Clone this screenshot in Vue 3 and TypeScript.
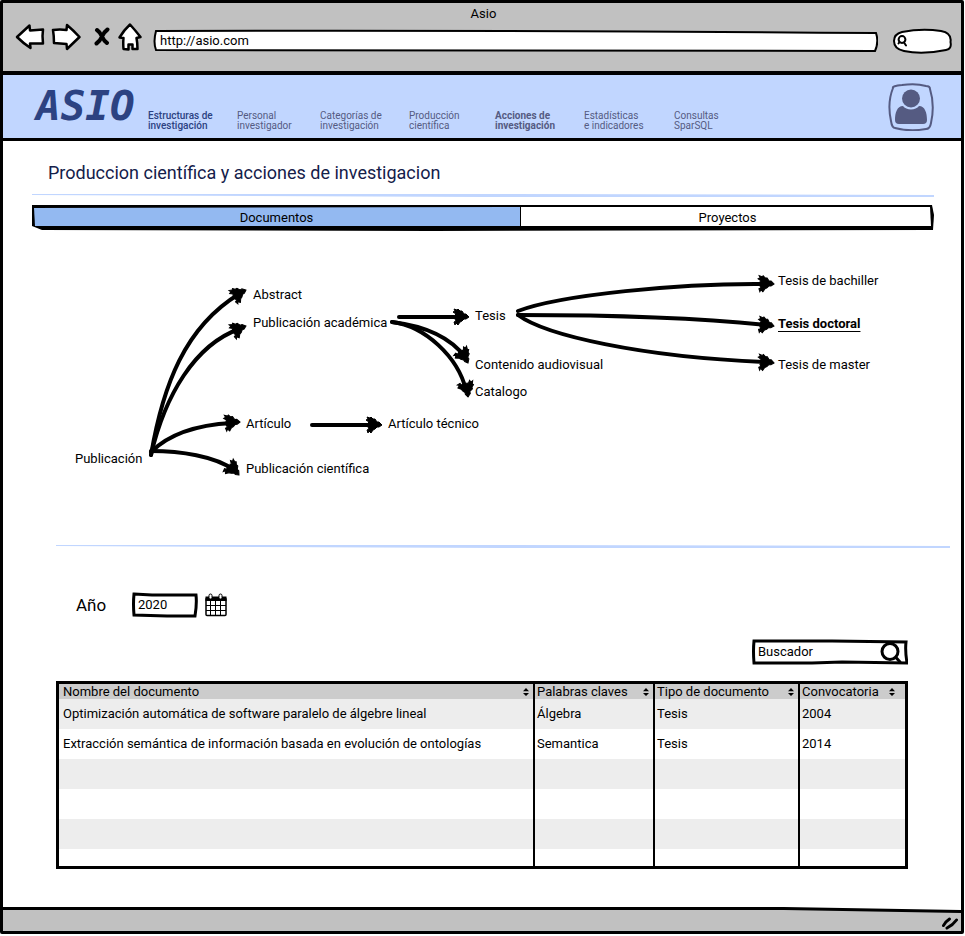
<script setup lang="ts">
import { ref, computed } from 'vue'

interface NavItem { top: string; bottom: string; width: number; tone?: string }
interface GraphNode { label: string; x: number; y: number; selected?: boolean }
interface Arrow { path: string; tip: [number, number]; angle: number }
interface Doc { name: string; keywords: string; kind: string; year: string }

const nav: NavItem[] = [
  { top: 'Estructuras de', bottom: 'investigación', width: 89, tone: 'strong' },
  { top: 'Personal', bottom: 'investigador', width: 83 },
  { top: 'Categorías de', bottom: 'investigación', width: 89 },
  { top: 'Producción', bottom: 'científica', width: 86 },
  { top: 'Acciones de', bottom: 'investigación', width: 89, tone: 'current' },
  { top: 'Estadísticas', bottom: 'e indicadores', width: 90 },
  { top: 'Consultas', bottom: 'SparSQL', width: 60 },
]

const nodes: GraphNode[] = [
  { label: 'Publicación', x: 43, y: 220 },
  { label: 'Abstract', x: 221, y: 56 },
  { label: 'Publicación académica', x: 221, y: 84 },
  { label: 'Artículo', x: 214, y: 185 },
  { label: 'Publicación científica', x: 214, y: 230 },
  { label: 'Artículo técnico', x: 356, y: 185 },
  { label: 'Tesis', x: 443, y: 77 },
  { label: 'Contenido audiovisual', x: 443, y: 126 },
  { label: 'Catalogo', x: 443, y: 153 },
  { label: 'Tesis de bachiller', x: 746, y: 42 },
  { label: 'Tesis doctoral', x: 746, y: 85, selected: true },
  { label: 'Tesis de master', x: 746, y: 126 },
]

const arrows: Arrow[] = [
  { path: 'M151 455C163 385 185 327 239 294', tip: [246, 290], angle: -30 },
  { path: 'M151 455C165 395 195 345 239 329', tip: [246, 326], angle: -24 },
  { path: 'M151 452C168 435 195 425 232 423', tip: [240, 422], angle: -5 },
  { path: 'M151 451C180 451 215 456 234 470', tip: [239, 475], angle: 42 },
  { path: 'M312 425H375', tip: [382, 425], angle: 0 },
  { path: 'M399 317H462', tip: [469, 317], angle: 0 },
  { path: 'M392 322C425 326 450 337 465 357', tip: [468, 363], angle: 57 },
  { path: 'M392 322C425 326 458 357 466 390', tip: [468, 397], angle: 78 },
  { path: 'M518 311C560 295 680 283 766 284', tip: [774, 284], angle: 1 },
  { path: 'M518 315C600 315 690 317 766 325', tip: [774, 326], angle: 6 },
  { path: 'M518 315C545 335 640 357 766 362', tip: [774, 363], angle: 3 },
]

const columns = ['Nombre del documento', 'Palabras claves', 'Tipo de documento', 'Convocatoria']
const keys: (keyof Doc)[] = ['name', 'keywords', 'kind', 'year']
const docs = ref<Doc[]>([
  { name: 'Optimización automática de software paralelo de álgebre lineal', keywords: 'Álgebra', kind: 'Tesis', year: '2004' },
  { name: 'Extracción semántica de información basada en evolución de ontologías', keywords: 'Semantica', kind: 'Tesis', year: '2014' },
])
const blankRows = computed(() => Math.max(0, 6 - docs.value.length))

const url = ref('http://asio.com')
const webQuery = ref('')
const year = ref('2020')
const query = ref('Buscador')
const tab = ref<'docs' | 'projects'>('docs')

function sortBy(index: number) {
  const key = keys[index]
  docs.value.sort((a, b) => a[key].localeCompare(b[key]))
}
</script>

<template>
  <div class="window">
    <header class="chrome">
      <div class="caption">Asio</div>
      <div class="toolbar">
        <button class="tool back" aria-label="Atrás">
          <svg width="30" height="28" viewBox="0 0 30 28"><path d="M2 14L14.500 2.500L15 7.500L28 6.500Q27 13 28 20.500L15 20.500L15.500 25Q8 20 2 14Z" /></svg>
        </button>
        <button class="tool forward" aria-label="Adelante">
          <svg width="30" height="28" viewBox="0 0 30 28"><path d="M2 7Q9 6 15.500 7L16 2Q22 7 28.500 14L16 26L15.500 21L3 20Q3 13 2 7Z" /></svg>
        </button>
        <button class="tool stop" aria-label="Detener">
          <svg width="18" height="20" viewBox="0 0 18 20"><path class="cross" d="M4 3Q7 5 9 9.500T14 16M14.500 2.500Q11 5 9 9.500T3.500 16.500" /></svg>
        </button>
        <button class="tool home" aria-label="Inicio">
          <svg width="24" height="28" viewBox="0 0 24 28"><path d="M12 1.500Q17 7 22.500 14L18.500 15Q19.500 20 19.500 26H14.500V21.500H10.500V26.500L5.500 26Q5 20 5.500 15L1.500 14.500Q6 7 12 1.500Z" /></svg>
        </button>
        <div class="address">
          <svg class="sketch" viewBox="0 0 724 24" preserveAspectRatio="none" aria-hidden="true">
            <path d="M3 2Q360 1 722 4Q725 13 721 22Q360 22 3 21Q0 13 3 2Z" />
          </svg>
          <input v-model="url" type="text" aria-label="Dirección" />
        </div>
        <div class="websearch">
          <svg class="sketch" viewBox="0 0 60 26" preserveAspectRatio="none" aria-hidden="true">
            <path d="M10 4Q30 0 49 3Q60 5 58.500 14Q60 21 54 22Q30 27 12 23Q2 21 2 13Q2 6 10 4Z" />
          </svg>
          <svg class="lens" width="12" height="12" viewBox="0 0 12 12" aria-hidden="true"><circle cx="6" cy="4.500" r="3.400" /><path d="M8 7.500L10 10.500M3.500 7L2.500 8.500" /></svg>
          <input v-model="webQuery" type="text" aria-label="Buscar en la web" />
        </div>
      </div>
    </header>

    <div class="masthead">
      <a class="logo" href="#">ASIO</a>
      <nav class="menu">
        <a v-for="item in nav" :key="item.top" href="#" :class="item.tone" :style="{ flexBasis: item.width + 'px' }">
          {{ item.top }}<br />{{ item.bottom }}
        </a>
      </nav>
      <button class="account" aria-label="Cuenta">
        <svg width="46" height="48" viewBox="0 0 46 48">
          <path class="ring" d="M5 5Q4 3 14 2Q28 0 38 3Q42 3 42 6Q47 22 43 40Q42 46 38 46Q22 49 7 45Q4 45 3 38Q-1 20 5 5Z" />
          <circle cx="23" cy="15.500" r="9" />
          <path d="M15 23C18 27.500 28 27.500 31 23C37 23 39 30 39 37Q39 41 35 41H11Q7 41 7 37C7 30 9 23 15 23Z" />
        </svg>
      </button>
    </div>

    <main>
      <h1>Produccion científica y acciones de investigacion</h1>
      <svg class="rule first" viewBox="0 0 902 3" preserveAspectRatio="none" aria-hidden="true"><path d="M0 0L450 0L902 1L902 3L450 3L0 1Z" /></svg>

      <div class="tabs" role="tablist">
        <svg class="sketch" viewBox="0 0 902 26" preserveAspectRatio="none" aria-hidden="true">
          <path class="edge" d="M0 0H900L902 10L901 25L400 26L10 25L0 21Z" />
          <path :class="tab === 'docs' ? 'active' : 'plain'" d="M2 3L488 2V21H3Z" />
          <path :class="tab === 'projects' ? 'active' : 'plain'" d="M489 2H898L899 21H489Z" />
        </svg>
        <button role="tab" :aria-selected="tab === 'docs'" @click="tab = 'docs'">Documentos</button>
        <button role="tab" :aria-selected="tab === 'projects'" @click="tab = 'projects'">Proyectos</button>
      </div>

      <section class="graph">
        <svg width="902" height="314" viewBox="32 231 902 314" aria-hidden="true">
          <defs>
            <path id="head" d="M0 0L-3 2L-5 2L-7 4L-9 5L-11 8L-13 6L-14 8L-15 5L-13 4L-14 2L-12 0L-14 -2L-13 -3L-16 -5L-14 -6L-15 -8L-12 -7L-11 -8L-9 -6L-7 -6L-5 -3L-3 -3Z" />
          </defs>
          <g v-for="(arrow, i) in arrows" :key="i">
            <path class="line" :d="arrow.path" />
            <use href="#head" class="tip" :transform="`translate(${arrow.tip[0]} ${arrow.tip[1]}) rotate(${arrow.angle})`" />
          </g>
        </svg>
        <a
          v-for="node in nodes"
          :key="node.label"
          href="#"
          class="node"
          :class="{ selected: node.selected }"
          :style="{ left: node.x + 'px', top: node.y + 'px' }"
        >{{ node.label }}</a>
      </section>

      <svg class="rule second" viewBox="0 0 902 3" preserveAspectRatio="none" aria-hidden="true"><path d="M0 0L450 0L902 1L902 3L450 3L0 1Z" /></svg>

      <div class="filters">
        <label for="year">Año</label>
        <div class="field year">
          <svg class="sketch" viewBox="0 0 66 26" preserveAspectRatio="none" aria-hidden="true">
            <path d="M2 2L20 3L64 3Q65 12 63 24L35 24L2 23Q1 12 2 2Z" />
          </svg>
          <input id="year" v-model="year" type="text" />
        </div>
        <button class="calendar" aria-label="Abrir calendario">
          <svg width="22" height="24" viewBox="0 0 22 24">
            <rect x="1" y="5" width="20" height="17.500" rx="1" fill="#fff" stroke="#000" stroke-width="1.500" />
            <path d="M0.500 3.500H21.500V8H0.500Z" />
            <path d="M5.500 8V22M10.500 8V22M15.500 8V22M1 12.500H21M1 17.500H21" stroke="#000" stroke-width="1" />
            <rect x="4" y="1" width="3" height="5" rx="1.500" fill="#fff" stroke="#000" />
            <rect x="14" y="1" width="3" height="5" rx="1.500" fill="#fff" stroke="#000" />
          </svg>
        </button>
      </div>

      <div class="finder">
        <div class="field search">
          <svg class="sketch" viewBox="0 0 156 26" preserveAspectRatio="none" aria-hidden="true">
            <path d="M2 2L80 2L154 3Q153 12 155 24L90 23L60 24L2 24Q1 12 2 2Z" />
          </svg>
          <input v-model="query" type="text" aria-label="Buscador de documentos" />
          <button aria-label="Buscar">
            <svg width="26" height="24" viewBox="0 0 26 24"><circle cx="12" cy="11.500" r="8" /><path d="M17.500 17L22.500 22.500" /></svg>
          </button>
        </div>
      </div>

      <table>
        <colgroup><col /><col class="keywords" /><col class="kind" /><col class="call" /></colgroup>
        <thead>
          <tr>
            <th v-for="(column, i) in columns" :key="column" scope="col">
              <div class="head">
                <span>{{ column }}</span>
                <button :aria-label="'Ordenar por ' + column" @click="sortBy(i)">
                  <svg width="6" height="8" viewBox="0 0 6 8"><path d="M0 3.300L3 0L6 3.300ZM0 4.900H6L3 8Z" /></svg>
                </button>
              </div>
            </th>
          </tr>
        </thead>
        <tbody>
          <tr v-for="doc in docs" :key="doc.name">
            <td v-for="key in keys" :key="key">{{ doc[key] }}</td>
          </tr>
          <tr v-for="n in blankRows" :key="n" class="blank"><td /><td /><td /><td /></tr>
        </tbody>
      </table>
    </main>

    <footer>
      <svg class="sketch" viewBox="0 0 957 6" preserveAspectRatio="none" aria-hidden="true">
        <path class="sky" d="M0 0H957V4L780 1L0 2Z" />
        <path class="edge" d="M0 0H780L957 3V6L780 3H0Z" />
      </svg>
      <svg class="grip" width="18" height="14" viewBox="0 0 18 14" aria-hidden="true"><path d="M2.500 9.500Q4 6 8.500 3M6 12Q12 9 15.500 4" /></svg>
    </footer>
  </div>
</template>

<style>
body {
  margin: 0;
  background: #fff;
}
</style>

<style scoped>
.window {
  box-sizing: border-box;
  display: flex;
  flex-direction: column;
  min-height: calc(100vh - 2px);
  margin: 0 1px 2px 0;
  border: 3px solid #000;
  border-radius: 2px;
  background: #fff;
  color: #000;
  font-family: Roboto, sans-serif;
  font-size: 13px;
  line-height: 16px;
}
button,
input {
  margin: 0;
  padding: 0;
  border: 0;
  background: none;
  color: inherit;
  font: inherit;
}
button {
  cursor: pointer;
}
svg {
  display: block;
}
a {
  color: inherit;
  text-decoration: none;
}
.sketch {
  position: absolute;
  inset: 0;
  width: 100%;
  height: 100%;
}

.chrome {
  padding: 3px 9px 19px 12px;
  border-bottom: 4px solid #000;
  background: #c1c1c1;
}
.caption {
  text-align: center;
}
.toolbar {
  display: flex;
  align-items: center;
  height: 30px;
}
.tool path {
  fill: #fff;
  stroke: #000;
  stroke-width: 2.5;
  stroke-linejoin: round;
}
.tool .cross {
  fill: none;
  stroke-width: 4;
  stroke-linecap: round;
}
.forward {
  margin-left: 6px;
}
.stop {
  margin-left: 12px;
}
.home {
  margin: 0 11px 0 7px;
}
.address,
.websearch {
  position: relative;
  height: 24px;
}
.address {
  flex: 1;
  margin-top: 8px;
}
.address path,
.websearch .sketch path,
.field .sketch path {
  fill: #fff;
  stroke: #000;
  stroke-width: 2;
  vector-effect: non-scaling-stroke;
}
.address input {
  position: relative;
  width: 100%;
  height: 22px;
  padding: 0 7px;
}
.websearch {
  display: flex;
  align-items: center;
  width: 60px;
  height: 26px;
  margin: 8px 0 0 14px;
}
.lens {
  position: relative;
  flex: none;
  margin-left: 4px;
  fill: none;
  stroke: #000;
  stroke-width: 2;
  stroke-linecap: round;
}
.websearch input {
  position: relative;
  width: 36px;
}

.masthead {
  display: flex;
  height: 63px;
  padding: 0 27px 0 33px;
  border-bottom: 3px solid #000;
  background: #c1d6ff;
}
.logo {
  width: 112px;
  color: #2c4282;
  font: italic bold 41px/62px "DejaVu Sans Mono", monospace;
}
.menu {
  display: flex;
  flex: 1;
  padding-top: 36px;
  color: #555b82;
  font-size: 10px;
  line-height: 10px;
}
.menu a {
  flex: none;
  white-space: nowrap;
}
.menu .strong {
  color: #2c4282;
  font-weight: 500;
}
.menu .current {
  font-weight: bold;
}
.account {
  width: 46px;
  height: 48px;
  margin-top: 8px;
}
.account svg {
  fill: #555b82;
}
.account .ring {
  fill: none;
  stroke: #555b82;
  stroke-width: 2;
}

main {
  flex: 1;
}
h1 {
  margin: 20px 0 0 45px;
  color: #14204a;
  font-size: 18px;
  font-weight: normal;
  line-height: 24px;
}
.rule {
  height: 3px;
  fill: #c1d6ff;
}
.rule.first {
  width: calc(100% - 56px);
  margin: 9px 27px 0 29px;
}
.rule.second {
  width: calc(100% - 64px);
  margin: 0 11px 0 53px;
}
.tabs {
  position: relative;
  display: grid;
  grid-template-columns: 489fr 413fr;
  height: 26px;
  margin: 8px 27px 0 29px;
}
.tabs button {
  position: relative;
  height: 25px;
}
.edge {
  fill: #000;
}
.active {
  fill: #93b9f1;
}
.plain {
  fill: #fff;
}
.graph {
  position: relative;
  height: 314px;
  margin-left: 29px;
}
.line {
  fill: none;
  stroke: #000;
  stroke-width: 4;
  stroke-linecap: round;
}
.tip {
  stroke: #000;
  stroke-width: 1;
}
.node {
  position: absolute;
  white-space: nowrap;
}
.node.selected {
  font-weight: bold;
  text-decoration: underline;
  text-underline-offset: 3px;
}

.filters {
  display: flex;
  align-items: center;
  margin: 44px 0 0 73px;
}
.filters label {
  width: 56px;
  font-size: 17px;
}
.field {
  position: relative;
  display: flex;
  align-items: center;
  height: 26px;
}
.field .sketch path {
  stroke-width: 3;
}
.field input {
  position: relative;
  width: 100%;
  padding-left: 6px;
}
.year {
  width: 66px;
}
.calendar {
  margin-left: 7px;
}
.finder {
  display: flex;
  justify-content: flex-end;
  margin: 21px 53px 0 0;
}
.search {
  width: 156px;
}
.search button {
  position: relative;
  margin-right: 4px;
}
.search button svg {
  fill: none;
  stroke: #000;
  stroke-width: 3;
}

table {
  width: calc(100% - 106px);
  margin: 16px 53px 38px 53px;
  border: 3px solid #000;
  border-spacing: 0;
  table-layout: fixed;
}
.keywords {
  width: 120px;
}
.kind {
  width: 145px;
}
.call {
  width: 107px;
}
th,
td {
  padding: 0 4px;
  text-align: left;
}
th + th,
td + td {
  padding-left: 2px;
  border-left: 2px solid #000;
}
th {
  background: #ccc;
  font-weight: normal;
}
.head {
  display: flex;
  align-items: center;
  justify-content: space-between;
  height: 15px;
}
th:last-child .head {
  padding-right: 6px;
}
td {
  height: 30px;
}
tbody tr:nth-child(odd) td {
  background: #ededed;
}
tbody tr:last-child td {
  height: 17px;
}

footer {
  position: relative;
  display: flex;
  align-items: center;
  justify-content: flex-end;
  height: 24px;
  padding: 0 2px;
  background: #c1c1c1;
}
footer .sketch {
  height: 6px;
}
.sky {
  fill: #fff;
}
.grip {
  margin-top: 7px;
  fill: none;
  stroke: #000;
  stroke-width: 3;
  stroke-linecap: round;
}
</style>
